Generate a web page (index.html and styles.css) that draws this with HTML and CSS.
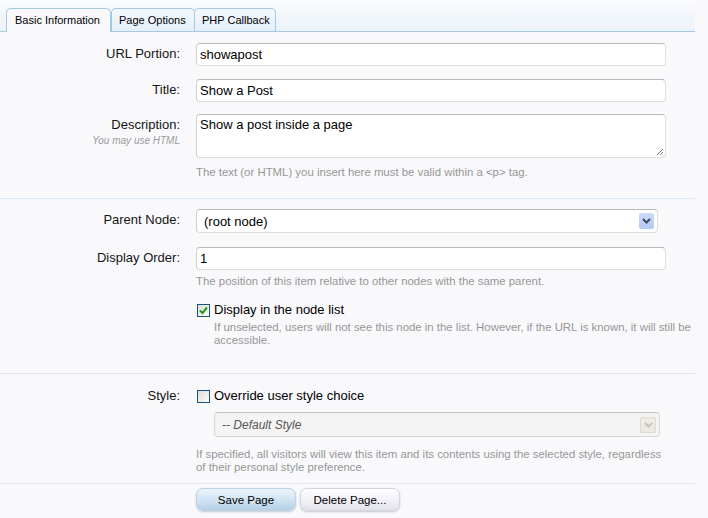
FILE: index.html
```html
<!DOCTYPE html>
<html>
<head>
<meta charset="utf-8">
<link rel="stylesheet" href="styles.css">
</head>
<body>
<div class="page">
  <div class="tabs">
    <div class="tab active t1">Basic Information</div>
    <div class="tab t2">Page Options</div>
    <div class="tab t3">PHP Callback</div>
  </div>

  <div class="section s1">
    <div class="row r1">
      <div class="label">URL Portion:</div>
      <div class="ctrl"><div class="input">showapost</div></div>
    </div>
    <div class="row r2">
      <div class="label">Title:</div>
      <div class="ctrl"><div class="input">Show a Post</div></div>
    </div>
    <div class="row">
      <div class="label">Description:<div class="sublabel">You may use HTML</div></div>
      <div class="ctrl">
        <div class="input textarea">Show a post inside a page
          <svg class="grip" width="8" height="8" viewBox="0 0 8 8"><path d="M7 1 L1 7 M7 4 L4 7" stroke="#777" stroke-width="1"/></svg>
        </div>
        <div class="hint h-desc">The text (or HTML) you insert here must be valid within a &lt;p&gt; tag.</div>
      </div>
    </div>
  </div>

  <div class="section s2">
    <div class="row r-sel">
      <div class="label">Parent Node:</div>
      <div class="ctrl">
        <div class="select">
          <span class="sel-text">(root node)</span>
          <span class="arrow"><svg width="9" height="6" viewBox="0 0 9 6"><path d="M1 1 L4.5 4.5 L8 1" fill="none" stroke="#3d4b6b" stroke-width="2"/></svg></span>
        </div>
      </div>
    </div>
    <div class="row">
      <div class="label">Display Order:</div>
      <div class="ctrl">
        <div class="input">1</div>
        <div class="hint h-order">The position of this item relative to other nodes with the same parent.</div>
        <div class="check-row cr1">
          <span class="checkbox"><svg width="11" height="11" viewBox="0 0 11 11"><path d="M2 5.5 L4.5 8 L9 2.5" fill="none" stroke="#1f9a1f" stroke-width="2"/></svg></span>
          <span class="check-label">Display in the node list</span>
        </div>
        <div class="hint indent">If unselected, users will not see this node in the list. However, if the URL is known, it will still be<br>accessible.</div>
      </div>
    </div>
  </div>

  <div class="section s3">
    <div class="row">
      <div class="label lab-style">Style:</div>
      <div class="ctrl">
        <div class="check-row">
          <span class="checkbox"></span>
          <span class="check-label">Override user style choice</span>
        </div>
        <div class="select disabled">
          <span class="sel-text">-- Default Style</span>
          <span class="arrow"><svg width="9" height="6" viewBox="0 0 9 6"><path d="M1 1 L4.5 4.5 L8 1" fill="none" stroke="#c4c4bc" stroke-width="2"/></svg></span>
        </div>
        <div class="hint h-style">If specified, all visitors will view this item and its contents using the selected style, regardless<br>of their personal style preference.</div>
      </div>
    </div>
  </div>

  <div class="section s4">
    <div class="row">
      <div class="label"></div>
      <div class="ctrl buttons">
        <button class="btn primary">Save Page</button>
        <button class="btn">Delete Page...</button>
      </div>
    </div>
  </div>
</div>
</body>
</html>
```

FILE: styles.css
```css
* { box-sizing: border-box; }
body {
  margin: 0;
  background: #f9f9fc;
  font-family: "Liberation Sans", Arial, sans-serif;
  color: #141414;
}
.page { width: 695px; }

.tabs {
  height: 32px;
  display: flex;
  align-items: flex-end;
  padding-left: 6px;
  background: linear-gradient(#fafbfd, #eaf2f9);
  border-bottom: 1px solid #a6c9e2;
}
.tab {
  height: 23px;
  line-height: 22px;
  font-size: 11px;
  padding: 0 0 0 7px;
  border: 1px solid #a6c9e2;
  border-bottom: none;
  border-radius: 5px 5px 0 0;
  background: linear-gradient(#f3f8fd, #e3eef9);
  color: #000;
  white-space: nowrap;
  overflow: hidden;
}
.t1 { width: 105px; margin-right: 0; }
.t2 { width: 84px; }
.t3 { width: 82px; margin-left: -1px; }
.tab.active {
  background: #f9f9fc;
  height: 24px;
  margin-bottom: -1px;
  padding-left: 8px;
}

.section { border-bottom: 1px solid #dce6ef; }
.s1 { padding: 11px 0 19px; border-bottom-color: #d7ecfb; }
.s2 { padding: 10px 0 26px; }
.s3 { padding: 14px 0 9px; }
.s4 { padding: 4px 0 8px; border-bottom: none; }

.row { display: flex; }
.r1 { margin-bottom: 13px; }
.r2 { margin-bottom: 12px; }
.r-sel { margin-bottom: 14px; }

.label {
  width: 180px;
  flex: none;
  text-align: right;
  font-size: 13px;
  line-height: 16px;
  padding-top: 3px;
  margin-right: 16px;
  color: #141414;
}
.lab-style { padding-top: 0; }
.sublabel {
  font-size: 10px;
  font-style: italic;
  color: #9a9a9a;
  line-height: 12px;
  margin-top: 2px;
}
.ctrl { flex: 1; }

.input {
  width: 470px;
  height: 23px;
  background: #fff;
  border: 1px solid #dedede;
  border-top-color: #b9b9b9;
  border-left-color: #cfcfcf;
  border-radius: 4px;
  font-size: 13px;
  line-height: 21px;
  padding: 0 3px;
  color: #000;
}
.textarea {
  height: 44px;
  position: relative;
  line-height: 19px;
}
.grip { position: absolute; right: 1px; bottom: 1px; }

.hint {
  font-size: 11.4px;
  line-height: 13px;
  color: #969696;
}
.h-desc { margin-top: 8px; }
.h-order { margin-top: 5px; }
.h-style { margin-top: 11px; white-space: nowrap; }
.indent { padding-left: 18px; margin-top: 3px; white-space: nowrap; }

.select {
  width: 462px;
  height: 24px;
  background: #fff;
  border: 1px solid #dedede;
  border-top-color: #b9b9b9;
  border-left-color: #cfcfcf;
  border-radius: 4px;
  display: flex;
  align-items: center;
  justify-content: space-between;
  padding: 0 3px 0 7px;
  font-size: 13px;
  color: #000;
}
.arrow {
  width: 15px;
  height: 16px;
  border-radius: 2px;
  background: linear-gradient(#cddcf9, #b3c9f3);
  display: flex;
  align-items: center;
  justify-content: center;
}
.select.disabled {
  width: 446px;
  height: 25px;
  margin-left: 18px;
  margin-top: 8px;
  background: #f4f4f4;
  border-color: #d6d6d6;
  border-top-color: #c4c4c4;
  color: #555;
  font-style: italic;
  font-size: 12px;
}
.select.disabled .arrow {
  width: 16px;
  background: #ebebe4;
  border: 1px solid #dedbd0;
}

.check-row {
  display: flex;
  align-items: center;
  font-size: 13px;
  line-height: 16px;
  color: #000;
}
.cr1 { margin-top: 14px; }
.checkbox {
  width: 13px;
  height: 13px;
  margin-left: 1px;
  margin-right: 4px;
  border: 1px solid #1c5180;
  background: linear-gradient(135deg, #dcdcd7, #fbfbf8);
  display: flex;
  align-items: center;
  justify-content: center;
}

.buttons { display: flex; gap: 4px; }
.btn {
  width: 100px;
  height: 23px;
  font-family: "Liberation Sans", Arial, sans-serif;
  font-size: 11.5px;
  color: #000;
  border: 1px solid #d4d4e0;
  border-radius: 7px;
  background: linear-gradient(#ffffff, #f2f2f8 50%, #e2e2ec);
  box-shadow: 0 1px 2px rgba(0,0,0,0.2);
  padding: 0;
}
.btn.primary {
  border-color: #bcd2e6;
  background: linear-gradient(#eef5fb, #d3e4f3 50%, #b4d0e8);
}
```
